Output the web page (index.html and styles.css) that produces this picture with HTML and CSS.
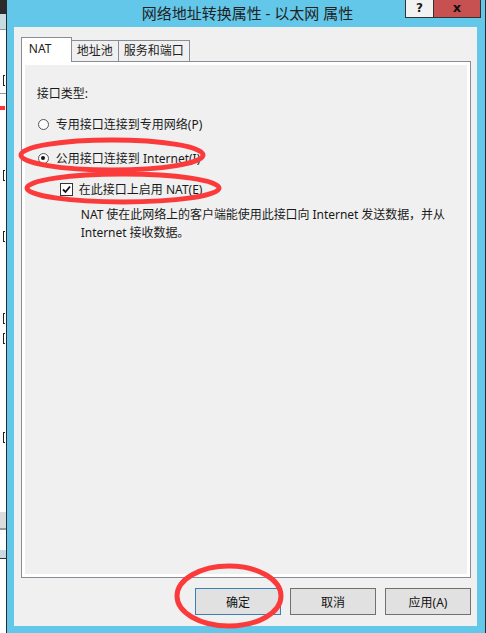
FILE: index.html
```html
<!DOCTYPE html>
<html lang="zh-CN">
<head>
    <meta charset="UTF-8">
    <title>网络地址转换属性 - 以太网 属性</title>
    <link rel="stylesheet" href="styles.css">
</head>
<body>

<div class="screen">
    <!-- right edge of another window behind this one -->
    <div class="behind">
        <div class="behind-top"></div>
        <div class="behind-band"></div>
        <div class="behind-row head"><span class="glyph"></span></div>
        <div class="behind-mark"></div>
        <div class="behind-row gap-1"><span class="glyph"></span></div>
        <div class="behind-row gap-2"><span class="glyph"></span></div>
        <div class="behind-row gap-3"><span class="glyph"></span></div>
        <div class="behind-row gap-4"><span class="glyph"></span></div>
        <div class="behind-row gap-5"><span class="glyph"></span></div>
        <div class="behind-foot"></div>
        <div class="behind-bar"></div>
    </div>

    <div class="window">
        <div class="titlebar">
            <div class="title">网络地址转换属性 - 以太网 属性</div>
            <div class="caption-buttons">
                <div class="cap-btn help">?</div>
                <div class="cap-btn close">x</div>
            </div>
        </div>

        <div class="client">
            <div class="tabs">
                <div class="tab active">NAT</div>
                <div class="tab">地址池</div>
                <div class="tab">服务和端口</div>
            </div>

            <div class="panel">
                <div class="panel-inner">
                    <div class="label">接口类型:</div>

                    <div class="option">
                        <span class="radio"></span>
                        <span>专用接口连接到专用网络(P)</span>
                    </div>
                    <div class="option second">
                        <span class="radio checked"></span>
                        <span>公用接口连接到 Internet(I)</span>
                    </div>
                    <div class="option check-row">
                        <span class="checkbox">
                            <svg width="9" height="9" viewBox="0 0 9 9"><path d="M1 4.5 L3.5 7 L8 1.5" fill="none" stroke="#111" stroke-width="1.8"/></svg>
                        </span>
                        <span>在此接口上启用 NAT(E)</span>
                    </div>
                    <p class="desc">NAT 使在此网络上的客户端能使用此接口向 Internet 发送数据，并从<br>Internet 接收数据。</p>
                </div>
            </div>

            <div class="buttons">
                <button class="default">确定</button>
                <button>取消</button>
                <button>应用(A)</button>
            </div>
        </div>
    </div>

    <div class="edge"></div>

    <svg class="marks" width="486" height="633" viewBox="0 0 486 633">
        <ellipse cx="112" cy="155" rx="91" ry="15" />
        <ellipse cx="123" cy="188" rx="96" ry="14" />
        <ellipse cx="229" cy="596" rx="52" ry="30" />
    </svg>
</div>

</body>
</html>
```

FILE: styles.css
```css
body {
    margin: 0;
    overflow: hidden;
    font-family: "Noto Sans", "Noto Sans CJK SC", sans-serif;
    font-size: 12px;
    color: #1a1a1a;
}

.screen {
    position: relative;
    display: flex;
    width: 486px;
    height: 633px;
    background: #62c7e9;
}

.behind {
    width: 6px;
    overflow: hidden;
    background: #fff;
    display: flex;
    flex-direction: column;
}

.behind-top {
    height: 14px;
    background: #2b2b2b;
}

.behind-band {
    height: 15px;
    background: #c7dbe0;
    border-bottom: 1px solid #999;
}

.behind-row {
    height: 12px;
    display: flex;
    justify-content: flex-end;
}

.glyph {
    width: 2px;
    height: 11px;
    border-top: 1px solid #222;
    border-bottom: 1px solid #222;
    border-left: 1px solid #222;
    box-sizing: border-box;
    margin-right: 1px;
}

.behind-row.head {
    margin-top: 45px;
    padding-bottom: 6px;
    border-bottom: 1px solid #999;
}

.behind-mark {
    height: 4px;
    width: 5px;
    margin-top: 12px;
    background: #f33;
}

.behind-row.gap-1 {
    margin-top: 60px;
}

.behind-row.gap-2 {
    margin-top: 49px;
}

.behind-row.gap-3 {
    margin-top: 70px;
}

.behind-row.gap-4 {
    margin-top: 8px;
}

.behind-row.gap-5 {
    margin-top: 87px;
}

.behind-foot {
    height: 16px;
    margin-top: 68px;
    background: #dcdcdc;
    border-bottom: 2px solid #999;
}

.behind-bar {
    height: 8px;
    margin-top: 20px;
    background: #c7dbe0;
    border-bottom: 1px solid #333;
}

.window {
    width: 477px;
    border-left: 1px solid #2b2b2b;
    display: flex;
    flex-direction: column;
    padding: 0 8px 7px 7px;
}

.edge {
    width: 1px;
    background: #2b2b2b;
}

.titlebar {
    height: 27px;
    display: flex;
    position: relative;
}

.title {
    flex: 1;
    text-align: center;
    font-size: 15px;
    line-height: 26px;
    color: #222;
    padding-left: 4px;
}

.caption-buttons {
    position: absolute;
    right: -4px;
    top: 0;
    display: flex;
}

.cap-btn {
    height: 18px;
    line-height: 16px;
    text-align: center;
    font-family: "DejaVu Sans", sans-serif;
    font-weight: bold;
    box-sizing: border-box;
}

.cap-btn.help {
    width: 28px;
    background: #f2f2f2;
    border: 1px solid #333;
    border-top: none;
    border-right: none;
    font-size: 12px;
}

.cap-btn.close {
    width: 48px;
    background: #c75050;
    border: 1px solid #333;
    border-top: none;
    font-size: 13px;
    color: #111;
}

.client {
    flex: 1;
    background: #f0f0f0;
    padding: 10px 6px 0 7px;
    display: flex;
    flex-direction: column;
}

.tabs {
    display: flex;
    align-items: flex-end;
    height: 24px;
    position: relative;
    z-index: 1;
}

.tab {
    height: 21px;
    line-height: 20px;
    padding: 0 5px;
    border: 1px solid #898c95;
    border-bottom: none;
    border-left: none;
    background: #f0f0f0;
    box-sizing: border-box;
    color: #222;
}

.tab.active {
    width: 51px;
    height: 25px;
    margin-bottom: -1px;
    background: #fff;
    border-left: 1px solid #898c95;
    padding-left: 7px;
    line-height: 22px;
}

.panel {
    height: 517px;
    box-sizing: border-box;
    border: 1px solid #898c95;
}

.panel-inner {
    height: 100%;
    box-sizing: border-box;
    border: 3px solid #fff;
    background: #f0f0f0;
    padding: 20px 0 0 12px;
}

.label {
    line-height: 18px;
}

.option {
    display: flex;
    align-items: center;
    height: 18px;
    margin-top: 12px;
}

.option.second {
    margin-top: 16px;
}

.option.check-row {
    margin-top: 13px;
    padding-left: 23px;
}

.radio {
    width: 9px;
    height: 9px;
    border: 1px solid #555;
    border-radius: 50%;
    background: #fdfdfd;
    margin: 0 7px 0 1px;
    display: flex;
    align-items: center;
    justify-content: center;
}

.radio.checked::after {
    content: "";
    width: 4px;
    height: 4px;
    border-radius: 50%;
    background: #111;
}

.checkbox {
    width: 11px;
    height: 11px;
    border: 1px solid #333;
    background: #fff;
    margin-right: 6px;
    display: flex;
    align-items: center;
    justify-content: center;
}

.desc {
    margin: 8px 0 0 44px;
    line-height: 18px;
    letter-spacing: -0.05px;
}

.buttons {
    display: flex;
    justify-content: flex-end;
    gap: 9px;
    margin-top: 10px;
}

button {
    width: 86px;
    height: 27px;
    font-family: "Noto Sans", "Noto Sans CJK SC", sans-serif;
    font-size: 12px;
    color: #111;
    background: #e1e1e1;
    border: 1px solid #707070;
    padding: 0;
}

button.default {
    border-color: #3c7fb1;
}

.marks {
    position: absolute;
    left: 0;
    top: 0;
}

.marks ellipse {
    fill: none;
    stroke: #fb3b3b;
    stroke-width: 5;
}
```
